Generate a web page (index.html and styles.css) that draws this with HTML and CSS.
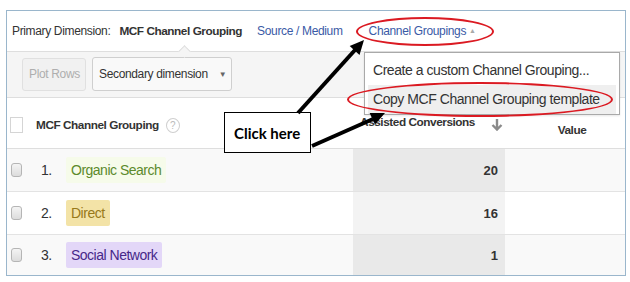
FILE: index.html
```html
<!DOCTYPE html>
<html>
<head>
<meta charset="utf-8">
<link rel="stylesheet" href="styles.css">
</head>
<body>
<div class="page">
  <div class="frame">
    <div class="primary">
      <span class="pd-label">Primary Dimension:</span>
      <span class="pd-active">MCF Channel Grouping</span>
      <a class="pd-link">Source / Medium</a>
      <a class="pd-link pd-groupings">Channel Groupings <span class="up-caret">▲</span></a>
    </div>
    <div class="toolbar">
      <button class="btn btn-disabled">Plot Rows</button>
      <button class="btn btn-select">Secondary dimension <span class="down-caret">▼</span></button>
    </div>
    <div class="grid">
      <div class="th th-dim">
        <span class="hcheck"></span>
        <span class="th-title">MCF Channel Grouping</span>
        <span class="help">?</span>
      </div>
      <div class="th th-num">
        <span class="th-title">Assisted Conversions</span>
        <svg class="sort" width="12" height="13" viewBox="0 0 12 13"><path d="M6 1 V11 M1.5 7 L6 11.5 L10.5 7" fill="none" stroke="#8a8a8a" stroke-width="2.4"/></svg>
      </div>
      <div class="th th-last"><span class="th-title">Conversion<br>Value</span></div>

      <div class="td td-dim odd"><span class="rcheck"></span><span class="idx">1.</span><span class="chip chip-green">Organic Search</span></div>
      <div class="td td-num odd-num">20</div>
      <div class="td odd"></div>

      <div class="td td-dim"><span class="rcheck"></span><span class="idx">2.</span><span class="chip chip-yellow">Direct</span></div>
      <div class="td td-num even-num">16</div>
      <div class="td"></div>

      <div class="td td-dim odd last"><span class="rcheck"></span><span class="idx">3.</span><span class="chip chip-purple">Social Network</span></div>
      <div class="td td-num odd-num last">1</div>
      <div class="td odd last"></div>
    </div>
  </div>

  <div class="menu">
    <div class="menu-item">Create a custom Channel Grouping...</div>
    <div class="menu-item menu-hover">Copy MCF Channel Grouping template</div>
  </div>

  <div class="ring ring-1"></div>
  <div class="ring ring-2"></div>

  <div class="callout">Click here</div>

  <svg class="arrows" width="630" height="282" viewBox="0 0 630 282">
    <line x1="298" y1="113" x2="355" y2="50" stroke="#000" stroke-width="4"/>
    <polygon points="364,40 359.5,55 349.7,46" fill="#000"/>
    <line x1="312" y1="146" x2="373" y2="119" stroke="#000" stroke-width="4"/>
    <polygon points="385,113 375,124.6 369.6,113" fill="#000"/>
  </svg>
</div>
</body>
</html>
```

FILE: styles.css
```css
* { box-sizing: border-box; }
html, body { margin: 0; padding: 0; background: #fff; }
body {
  font-family: "Liberation Sans", Arial, sans-serif;
  color: #333;
}
.page {
  position: relative;
  width: 630px;
  height: 282px;
  overflow: hidden;
}
.frame {
  margin: 10px 0 0 6px;
  width: 620px;
  height: 266px;
  border: 1px solid #9ab6cc;
  overflow: hidden;
  display: flex;
  flex-direction: column;
}
.primary {
  position: relative;
  height: 41px;
  flex: none;
  display: flex;
  align-items: center;
  white-space: nowrap;
  padding: 0 0 1px 5px;
  border-bottom: 1px solid #dedede;
  font-size: 12px;
  letter-spacing: -0.35px;
}
.pd-label { color: #333; margin-right: 9px; }
.pd-active { font-weight: bold; color: #333; margin-right: 15px; font-size: 11.8px; letter-spacing: -0.45px; }
.primary::after {
  content: "";
  position: absolute;
  left: 173px;
  bottom: -5px;
  width: 8px;
  height: 8px;
  background: #f5f5f5;
  border-left: 1px solid #dedede;
  border-top: 1px solid #dedede;
  transform: rotate(45deg);
}
.pd-link { color: #3a5aa6; margin-right: 26px; }
.up-caret { color: #aaa; font-size: 7px; vertical-align: 2px; }
.toolbar {
  height: 46px;
  flex: none;
  background: #f5f5f5;
  border-bottom: 1px solid #dedede;
  display: flex;
  align-items: center;
  gap: 6px;
  padding: 0 0 1px 15px;
}
.btn {
  font-family: inherit;
  font-size: 12px;
  letter-spacing: -0.35px;
  height: 33px;
  border-radius: 3px;
  padding: 0 0 0 6px;
  text-align: left;
  white-space: nowrap;
}
.btn-disabled {
  width: 64px;
  color: #aeaeae;
  background: #f1f1f1;
  border: 1px solid #e0e0e0;
}
.btn-select {
  width: 140px;
  height: 34px;
  color: #333;
  background: #f9f9f9;
  border: 1px solid #cfcfcf;
}
.down-caret { color: #666; font-size: 8px; margin-left: 8px; vertical-align: 1px; }
.grid {
  flex: 1;
  display: grid;
  grid-template-columns: 346px 152px 1fr;
  grid-template-rows: 51px 43px 43px 1fr;
}
.th {
  background: #fff;
  border-bottom: 1px solid #dedede;
  display: flex;
  align-items: center;
  font-size: 11.8px;
  letter-spacing: -0.45px;
  font-weight: bold;
  color: #333;
  white-space: nowrap;
}
.th-dim { padding: 4px 0 0 3px; }
.hcheck {
  width: 13px;
  height: 16px;
  border: 1px solid #d5d5d5;
  background: #fff;
  margin-right: 13px;
}
.help {
  width: 14px;
  height: 15px;
  border: 1px solid #cfcfcf;
  border-radius: 50%;
  font-size: 10px;
  font-weight: normal;
  letter-spacing: 0;
  color: #bbb;
  display: flex;
  align-items: center;
  justify-content: center;
  margin-left: 7px;
}
.th-num { justify-content: flex-end; padding: 0 2px 3px 0; }
.th-num .th-title { margin-right: 16px; }
.sort { margin-top: 5px; }
.th-last {
  justify-content: center;
  align-items: flex-end;
  text-align: center;
  padding: 0 0 5px 14px;
  line-height: 25px;
}
.td {
  border-bottom: 1px solid #e3e3e3;
  background: #fff;
  display: flex;
  align-items: center;
}
.td.last { border-bottom: none; }
.odd { background: #f9f9f9; }
.odd-num { background: #e9e9e9; }
.even-num { background: #f3f3f3; }
.td-dim { padding-left: 4px; font-size: 14px; letter-spacing: -0.5px; }
.rcheck {
  width: 11px;
  height: 14px;
  border: 1px solid #b5b5b5;
  border-radius: 3px;
  background: linear-gradient(#f4f4f4, #dcdcdc);
}
.idx { margin-left: 19px; width: 25px; color: #333; }
.chip {
  padding: 0 5px;
  height: 26px;
  line-height: 26px;
  border-radius: 2px;
}
.chip-green { background: #f6fbea; color: #5c8a2c; }
.chip-yellow { background: #f3e3a7; color: #98791a; }
.chip-purple { background: #e3d7f8; color: #47288a; }
.td-num {
  justify-content: flex-end;
  padding-right: 7px;
  font-size: 13px;
  font-weight: bold;
  color: #333;
}
.menu {
  position: absolute;
  left: 364px;
  top: 52px;
  width: 256px;
  height: 63px;
  background: #fff;
  border: 1px solid #a9a9a9;
  padding: 3px 3px 0 3px;
  font-size: 14px;
  letter-spacing: -0.45px;
  color: #333;
  box-shadow: 0 1px 2px rgba(0,0,0,0.1);
}
.menu-item {
  height: 29px;
  line-height: 29px;
  padding-left: 5px;
  white-space: nowrap;
}
.menu-hover { background: #efefef; }
.ring {
  position: absolute;
  border: 2.5px solid #db1a22;
  border-radius: 50%;
}
.ring-1 { left: 356px; top: 17px; width: 138px; height: 29px; }
.ring-2 { left: 347px; top: 82px; width: 266px; height: 35px; }
.callout {
  position: absolute;
  left: 224px;
  top: 112px;
  width: 87px;
  height: 41px;
  border: 1px solid #000;
  background: #fff;
  font-family: Lato, "Open Sans", sans-serif;
  font-weight: bold;
  font-size: 15px;
  color: #000;
  padding: 0 0 0 9px;
  display: flex;
  align-items: center;
}
.arrows { position: absolute; left: 0; top: 0; }
```
